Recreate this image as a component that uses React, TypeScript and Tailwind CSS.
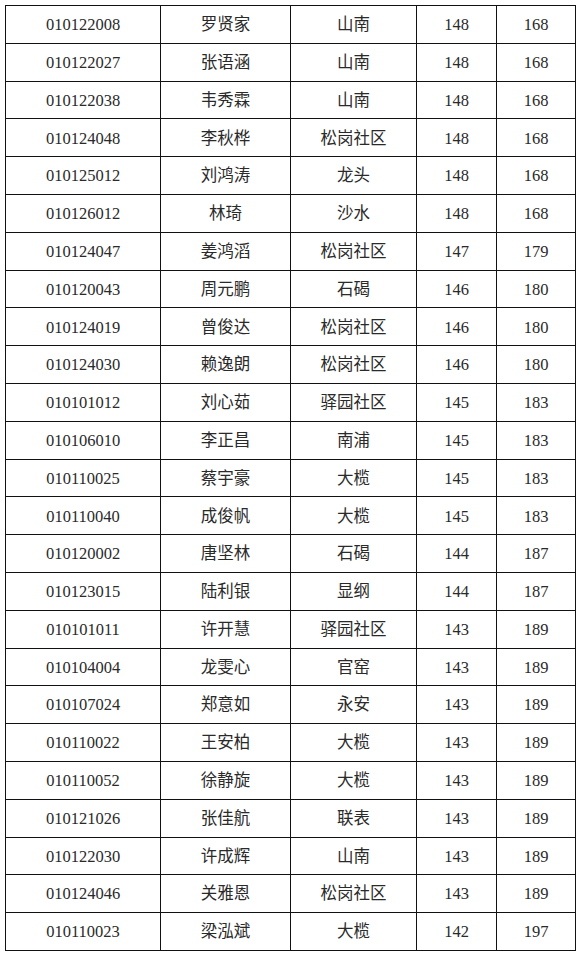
import React from "react";

const ROWS: [string, string, string, string, string][] = [
  ["010122008", "罗贤家", "山南", "148", "168"],
  ["010122027", "张语涵", "山南", "148", "168"],
  ["010122038", "韦秀霖", "山南", "148", "168"],
  ["010124048", "李秋桦", "松岗社区", "148", "168"],
  ["010125012", "刘鸿涛", "龙头", "148", "168"],
  ["010126012", "林琦", "沙水", "148", "168"],
  ["010124047", "姜鸿滔", "松岗社区", "147", "179"],
  ["010120043", "周元鹏", "石碣", "146", "180"],
  ["010124019", "曾俊达", "松岗社区", "146", "180"],
  ["010124030", "赖逸朗", "松岗社区", "146", "180"],
  ["010101012", "刘心茹", "驿园社区", "145", "183"],
  ["010106010", "李正昌", "南浦", "145", "183"],
  ["010110025", "蔡宇豪", "大榄", "145", "183"],
  ["010110040", "成俊帆", "大榄", "145", "183"],
  ["010120002", "唐坚林", "石碣", "144", "187"],
  ["010123015", "陆利银", "显纲", "144", "187"],
  ["010101011", "许开慧", "驿园社区", "143", "189"],
  ["010104004", "龙雯心", "官窑", "143", "189"],
  ["010107024", "郑意如", "永安", "143", "189"],
  ["010110022", "王安柏", "大榄", "143", "189"],
  ["010110052", "徐静旋", "大榄", "143", "189"],
  ["010121026", "张佳航", "联表", "143", "189"],
  ["010122030", "许成辉", "山南", "143", "189"],
  ["010124046", "关雅恩", "松岗社区", "143", "189"],
  ["010110023", "梁泓斌", "大榄", "142", "197"],
];

const WIDTHS = ["w-[155px]", "w-[130px]", "w-[126px]", "w-[80px]", "w-[79px]"];

const App = () => {
  return (
    <div className="bg-white w-[580px] h-[954px] pt-[5px] pl-[5px]">
      <table className="border-collapse table-fixed">
        <tbody>
          {ROWS.map((row) => (
            <tr key={row[0]} className="h-[37.8px]">
              {row.map((cell, i) => (
                <td
                  key={i}
                  className={`${WIDTHS[i]} border-[1.5px] border-[#111] text-center align-middle p-0 pt-[2px] leading-none text-[16.5px] text-[#2a2a2a] font-['Liberation_Serif','Noto_Sans_CJK_SC',serif]`}
                >
                  {cell}
                </td>
              ))}
            </tr>
          ))}
        </tbody>
      </table>
    </div>
  );
};

export default App;
